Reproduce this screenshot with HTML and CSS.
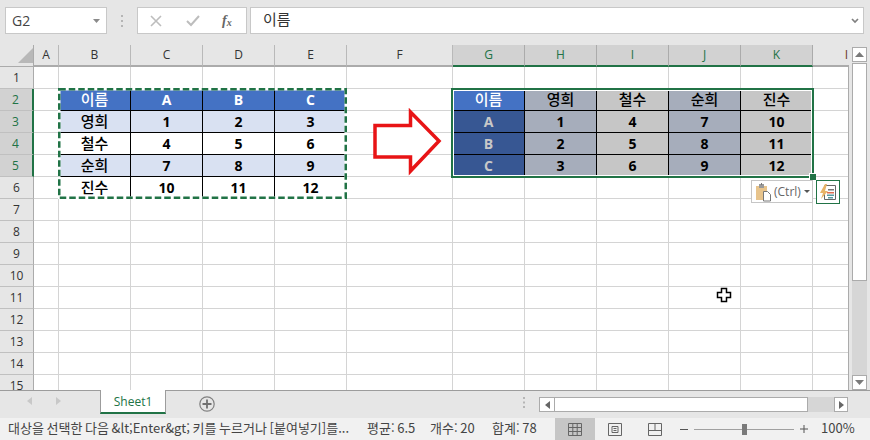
FILE: index.html
```html
<!DOCTYPE html>
<html lang="ko">
<head>
<meta charset="utf-8">
<title>Sheet1</title>
<link rel="stylesheet" href="styles.css">
</head>
<body>
<div class="app">
  <div class="formula-bar">
    <div class="name-box"><span>G2</span><svg class="caret" width="7" height="4" viewBox="0 0 7 4"><path d="M0 0h7L3.5 4z" fill="#8a8a8a"/></svg></div>
    <svg class="grip" width="3" height="12" viewBox="0 0 3 12"><path d="M0 0h2v2H0zM0 5h2v2H0zM0 10h2v2H0z" fill="#b5b5b5"/></svg>
    <div class="fx-box">
      <svg width="12" height="12" viewBox="0 0 12 12"><path d="M1 1l10 10M11 1L1 11" stroke="#bdbdbd" stroke-width="1.6" fill="none"/></svg>
      <svg width="14" height="12" viewBox="0 0 14 12"><path d="M1 6l4 4 8-9" stroke="#bdbdbd" stroke-width="2" fill="none"/></svg>
      <span class="fx">f<sub>x</sub></span>
    </div>
    <div class="formula-input"><span>이름</span><svg width="8" height="6" viewBox="0 0 8 6"><path d="M1 1l3 3 3-3" stroke="#808080" stroke-width="1.7" fill="none"/></svg></div>
  </div>

  <div class="main">
    <div class="sheet">
      <div class="corner"><svg width="15" height="15" viewBox="0 0 15 15"><path d="M15 0v15H0z" fill="#b8b8b8"/></svg></div>
      <div class="ch">A</div><div class="ch">B</div><div class="ch">C</div><div class="ch">D</div><div class="ch">E</div><div class="ch">F</div>
      <div class="ch sel">G</div><div class="ch sel">H</div><div class="ch sel">I</div><div class="ch sel">J</div><div class="ch sel">K</div>
      <div class="ch ch-l">I</div>

      <div class="rows">
        <div class="rh">1</div><div class="rh sel">2</div><div class="rh sel">3</div><div class="rh sel">4</div><div class="rh sel">5</div>
        <div class="rh">6</div><div class="rh">7</div><div class="rh">8</div><div class="rh">9</div><div class="rh">10</div>
        <div class="rh">11</div><div class="rh">12</div><div class="rh">13</div><div class="rh">14</div><div class="rh">15</div>
      </div>

      <div class="cells">
        <div class="tbl src">
          <div class="c hd ko">이름</div><div class="c hd">A</div><div class="c hd">B</div><div class="c hd">C</div>
          <div class="c band ko">영희</div><div class="c band">1</div><div class="c band">2</div><div class="c band">3</div>
          <div class="c ko">철수</div><div class="c">4</div><div class="c">5</div><div class="c">6</div>
          <div class="c band ko">순희</div><div class="c band">7</div><div class="c band">8</div><div class="c band">9</div>
          <div class="c ko">진수</div><div class="c">10</div><div class="c">11</div><div class="c">12</div>
          <svg class="marquee" width="289" height="111" viewBox="0 0 289 111"><rect x="1.250" y="1.250" width="286.500" height="108.500" fill="none" stroke="#fff" stroke-width="2.500"/><rect x="1.250" y="1.250" width="286.500" height="108.500" fill="none" stroke="#217346" stroke-width="2.500" stroke-dasharray="6.500 3"/></svg>
        </div>

        <div class="tbl dst">
          <div class="c hd ko">이름</div><div class="c b1 ko">영희</div><div class="c b2 ko">철수</div><div class="c b1 ko">순희</div><div class="c b2 ko">진수</div>
          <div class="c dk">A</div><div class="c b1">1</div><div class="c b2">4</div><div class="c b1">7</div><div class="c b2">10</div>
          <div class="c dk">B</div><div class="c b1">2</div><div class="c b2">5</div><div class="c b1">8</div><div class="c b2">11</div>
          <div class="c dk">C</div><div class="c b1">3</div><div class="c b2">6</div><div class="c b1">9</div><div class="c b2">12</div>
          <div class="selbox"></div>
          <div class="handle"></div>
        </div>

        <svg class="arrow" width="70" height="68" viewBox="0 0 70 68"><path d="M2 17.500H37.500V4L66 33 37.500 63V49H2z" fill="#fff" stroke="#e81416" stroke-width="3.500"/></svg>

        <div class="paste">
          <svg width="18" height="20" viewBox="0 0 18 20"><path d="M1 4h11v14H1z" fill="#e8c48c"/><path d="M4 2h5v4H4z" fill="#9a9a9a"/><path d="M6 1h1v2H6z" fill="#777"/><path d="M8.500 9.500h4l3 3v6.500h-7z" fill="#fff" stroke="#777"/></svg>
          <span>(Ctrl)</span>
          <svg class="paste-caret" width="6" height="3" viewBox="0 0 6 3"><path d="M0 0h6L3 3z" fill="#555"/></svg>
        </div>
        <div class="quick">
          <svg width="18" height="18" viewBox="0 0 18 18"><path d="M5.500 2.500h11v14h-11z" fill="#fff" stroke="#666"/><path d="M6 1L1 10h3l-2 6 7-8H6l2-7z" fill="#e8b468"/><path d="M9 6h6v1.500H9z" fill="#777"/><path d="M8 9h7v1.500H8z" fill="#e06c50"/><path d="M8 11.500h7V13H8z" fill="#5a9aa0"/><path d="M9 14h5v1.500H9z" fill="#5a9aa0"/></svg>
        </div>
        <svg class="cursor" width="16" height="16" viewBox="0 0 16 16"><path d="M5.500 1.500h5v4h4v5h-4v4h-5v-4h-4v-5h4z" fill="#fff" stroke="#000" stroke-width="1.500"/></svg>
      </div>
    </div>

    <div class="vscroll">
      <div class="sb-btn"><svg width="9" height="5" viewBox="0 0 9 5"><path d="M4.500 0L9 5H0z" fill="#7a7a7a"/></svg></div>
      <div class="vthumb"></div>
      <div class="vtrack"></div>
      <div class="sb-btn"><svg width="9" height="5" viewBox="0 0 9 5"><path d="M0 0h9L4.500 5z" fill="#7a7a7a"/></svg></div>
    </div>
  </div>

  <div class="tabbar">
    <div class="tab-nav">
      <svg width="5" height="8" viewBox="0 0 5 8"><path d="M5 0v8L0 4z" fill="#c8c8c8"/></svg>
      <svg width="5" height="8" viewBox="0 0 5 8"><path d="M0 0v8l5-4z" fill="#c8c8c8"/></svg>
    </div>
    <div class="tab">Sheet1</div>
    <svg class="add" width="16" height="16" viewBox="0 0 16 16"><circle cx="8" cy="8" r="7.200" fill="none" stroke="#808080" stroke-width="1.200"/><path d="M8 3.500v9M3.500 8h9" stroke="#707070" stroke-width="1.800"/></svg>
    <svg class="grip2" width="3" height="11" viewBox="0 0 3 11"><path d="M0 0h2v2H0zM0 4.500h2v2H0zM0 9h2v2H0z" fill="#b5b5b5"/></svg>
    <div class="hscroll">
      <div class="hbtn"><svg width="5" height="8" viewBox="0 0 5 8"><path d="M5 0v8L0 4z" fill="#666"/></svg></div>
      <div class="hthumb"></div>
      <div class="htrack"></div>
      <div class="hbtn end"><svg width="5" height="8" viewBox="0 0 5 8"><path d="M0 0v8l5-4z" fill="#666"/></svg></div>
    </div>
  </div>

  <div class="status">
    <span class="msg">대상을 선택한 다음 &amp;lt;Enter&amp;gt; 키를 누르거나 [붙여넣기]를...</span>
    <span class="st st-avg">평균: 6.5</span>
    <span class="st st-cnt">개수: 20</span>
    <span class="st st-sum">합계: 78</span>
    <div class="view active"><svg width="14" height="13" viewBox="0 0 14 13"><path d="M.5.500h13v12H.5zM.5 4.500h13M.5 8.500h13M4.800.500v12M9.200.500v12" fill="none" stroke="#666"/></svg></div>
    <div class="view"><svg width="14" height="13" viewBox="0 0 14 13"><path d="M.5.500h13v12H.5zM4 3.500h6v6H4zM5.500 5.500h3M5.500 7.500h3" fill="none" stroke="#666"/></svg></div>
    <div class="view"><svg width="14" height="13" viewBox="0 0 14 13"><path d="M.5.500h13v12H.5zM.5 7.500h13M7 .500v7" fill="none" stroke="#666"/></svg></div>
    <div class="zoom">
      <svg width="8" height="1" viewBox="0 0 8 1"><path d="M0 0h8v1H0z" fill="#555"/></svg>
      <div class="slider"><div class="knob"></div></div>
      <svg width="8" height="8" viewBox="0 0 8 8"><path d="M0 3.500h8v1H0zM3.500 0h1v8h-1z" fill="#555"/></svg>
    </div>
    <span class="pct">100%</span>
  </div>
</div>
</body>
</html>
```
FILE: styles.css
```css
* { box-sizing: border-box; }
html, body { margin: 0; padding: 0; }
body {
  width: 870px;
  height: 440px;
  overflow: hidden;
  background: #e6e6e6;
  font-family: "Noto Sans CJK KR", "Noto Sans", sans-serif;
  color: #444;
}
svg { display: block; flex: none; }
.app { display: flex; flex-direction: column; height: 440px; }

/* formula bar */
.formula-bar { height: 45px; padding: 7px 6px 11px 5px; display: flex; align-items: stretch; }
.name-box, .fx-box, .formula-input { background: #fff; border: 1px solid #c8c8c8; display: flex; align-items: center; }
.name-box { width: 102px; padding: 0 5px 0 6px; justify-content: space-between; font: 14px/1 "Open Sans", sans-serif; color: #444; }
.caret { margin-right: 1px; }
.grip { align-self: center; margin: 0 13px 0 14px; }
.fx-box { width: 110px; padding-left: 12px; }
.fx-box svg:nth-child(2) { margin-left: 24px; }
.fx { margin-left: 22px; font: italic bold 14px/1 "Liberation Serif", serif; color: #666; }
.fx sub { font-size: 10px; vertical-align: -1px; }
.formula-input { margin-left: 3px; width: 614px; padding: 0 4px 0 12px; justify-content: space-between; font-size: 15px; color: #333; line-height: 1; }
.formula-input span { position: relative; top: -2px; }

/* main area */
.main { height: 345px; display: flex; }
.sheet {
  width: 849px;
  height: 345px;
  overflow: hidden;
  display: grid;
  grid-template-columns: 34px 25px repeat(4, 72px) 106px repeat(5, 72px) 36px;
  grid-template-rows: 22px 323px;
}
.corner { padding: 3px 1px 0 18px; border-right: 1px solid #ababab; border-bottom: 1px solid #ababab; }
.ch {
  border-right: 1px solid #b9b9b9;
  border-bottom: 2px solid #ababab;
  text-align: center;
  font: 12px/20px "Open Sans", sans-serif;
  color: #333;
}
.ch.sel { background: #d2d2d2; color: #217346; border-bottom-color: #217346; border-right-color: #ababab; }
.ch-l { border-right: 0; text-align: right; padding-right: 1px; color: #6b3a28; overflow: hidden; }
.rows { grid-column: 1; display: grid; grid-auto-rows: 22px; align-content: start; }
.rh {
  border-right: 1px solid #ababab;
  border-bottom: 1px solid #c0c0c0;
  background: #e6e6e6;
  text-align: center;
  font: 12px/21px "Open Sans", sans-serif;
  color: #333;
}
.rh.sel { background: #d2d2d2; color: #217346; border-right: 2px solid #217346; padding-right: 1px; }

.cells {
  grid-column: 2 / -1;
  position: relative;
  display: grid;
  grid-template-columns: 25px repeat(4, 72px) 106px repeat(5, 72px) 36px;
  grid-auto-rows: 22px;
  background-color: #fff;
  background-image:
    repeating-linear-gradient(to bottom, transparent 0, transparent 21px, #d4d4d4 21px, #d4d4d4 22px),
    linear-gradient(to right, transparent 24px, #d4d4d4 24px, #d4d4d4 25px, transparent 25px, transparent 96px, #d4d4d4 96px, #d4d4d4 97px, transparent 97px, transparent 168px, #d4d4d4 168px, #d4d4d4 169px, transparent 169px, transparent 240px, #d4d4d4 240px, #d4d4d4 241px, transparent 241px, transparent 312px, #d4d4d4 312px, #d4d4d4 313px, transparent 313px, transparent 418px, #d4d4d4 418px, #d4d4d4 419px, transparent 419px, transparent 490px, #d4d4d4 490px, #d4d4d4 491px, transparent 491px, transparent 562px, #d4d4d4 562px, #d4d4d4 563px, transparent 563px, transparent 634px, #d4d4d4 634px, #d4d4d4 635px, transparent 635px, transparent 706px, #d4d4d4 706px, #d4d4d4 707px, transparent 707px, transparent 778px, #d4d4d4 778px, #d4d4d4 779px, transparent 779px);
  border-right: 1px solid #ababab;
}

/* tables */
.tbl { display: grid; grid-auto-rows: 22px; position: relative; align-self: start; }
.src { grid-column: 2 / 6; grid-row: 2 / 7; grid-template-columns: repeat(4, 72px); }
.dst { grid-column: 7 / 12; grid-row: 2 / 6; grid-template-columns: repeat(5, 72px); }
.c {
  border-right: 1px solid #000;
  border-bottom: 1px solid #000;
  text-align: center;
  font: 700 14px/21px "Open Sans", "Noto Sans CJK KR", sans-serif;
  color: #000;
}
.c.ko { font-family: "Noto Sans CJK KR", sans-serif; font-size: 15px; font-weight: 500; line-height: 19px; }
.c.hd { background: #4472c4; color: #fff; }
.c.band { background: #d9e1f2; }
.c.b1 { background: #a6adbb; }
.c.b2 { background: #c6c6c6; }
.c.dk { background: #375793; color: #c8c8c8; }
.marquee { position: absolute; left: -1px; top: -1px; }
.selbox { position: absolute; left: -2px; top: -1px; width: 363px; height: 90px; border: 2px solid #217346; box-shadow: inset 0 0 0 1px #fff; }
.handle { position: absolute; left: 356px; top: 84px; width: 7px; height: 7px; background: #217346; border: 1px solid #fff; border-right: 0; border-bottom: 0; }

/* overlays */
.arrow { position: absolute; left: 339px; top: 41px; }
.paste {
  position: absolute; left: 717px; top: 113px; width: 62px; height: 23px;
  background: #fff; border: 1px solid #c6c6c6;
  display: flex; align-items: center; gap: 1px; padding-left: 3px;
  font: 12px/1 "Open Sans", sans-serif; color: #666;
}
.paste-caret { margin-left: 2px; }
.quick { position: absolute; left: 782px; top: 113px; width: 24px; height: 24px; background: #fff; border: 1px solid #217346; padding: 2px; }
.cursor { position: absolute; left: 682px; top: 220px; }

/* vertical scrollbar */
.vscroll { width: 21px; padding: 2px 3px 0 3px; display: flex; flex-direction: column; }
.sb-btn { height: 15px; background: #fff; border: 1px solid #ababab; display: flex; align-items: center; justify-content: center; flex: none; }
.vthumb { height: 218px; background: #fff; border: 1px solid #ababab; margin-top: 1px; flex: none; }
.vtrack { flex: 1; background: #d6d6d6; }

/* sheet tabs */
.tabbar { height: 28px; border-top: 1px solid #9c9c9c; display: flex; align-items: flex-start; position: relative; }
.tab-nav { width: 100px; height: 22px; padding: 6px 0 0 27px; display: flex; gap: 24px; }
.tab {
  width: 66px; height: 24px; margin-top: -1px; background: #fff;
  border-left: 1px solid #9c9c9c; border-right: 1px solid #9c9c9c; border-bottom: 2px solid #217346;
  text-align: center; font: 12px/23px "Open Sans", sans-serif; color: #217346;
}
.add { margin: 5px 0 0 33px; }
.grip2 { margin: 6px 0 0 308px; }
.hscroll { margin: 6px 0 0 13px; width: 309px; height: 15px; display: flex; }
.hbtn { width: 16px; background: #fff; border: 1px solid #ababab; display: flex; align-items: center; justify-content: center; flex: none; }
.hbtn.end { width: 14px; }
.hthumb { width: 253px; background: #fff; border: 1px solid #ababab; border-left: 0; flex: none; }
.htrack { flex: 1; background: #d6d6d6; }

/* status bar */
.status { height: 22px; background: #f1f1f1; display: flex; align-items: stretch; font-size: 13px; line-height: 19px; word-spacing: -1px; color: #444; white-space: nowrap; }
.msg { width: 359px; padding-left: 8px; overflow: hidden; flex: none; }
.st { flex: none; }
.st-avg { width: 63px; margin-left: 8px; }
.st-cnt { width: 62px; }
.st-sum { width: 63px; }
.view { width: 40px; display: flex; align-items: center; justify-content: center; flex: none; }
.view.active { background: #c6c6c6; }
.zoom { display: flex; align-items: center; margin-left: 5px; gap: 6px; flex: none; }
.slider { width: 100px; height: 1px; background: #a0a0a0; position: relative; }
.knob { position: absolute; left: 48px; top: -5px; width: 5px; height: 11px; background: #7a7a7a; }
.pct { margin-left: 13px; flex: none; }
```
